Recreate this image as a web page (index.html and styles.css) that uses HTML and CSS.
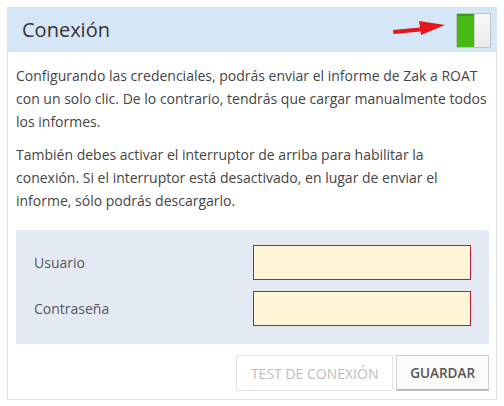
FILE: index.html
```html
<!DOCTYPE html>
<html lang="es">
<head>
<meta charset="utf-8">
<link rel="stylesheet" href="styles.css">
</head>
<body>
<div class="panel">
  <div class="panel-header">
    <h2 class="title">Conexión</h2>
    <div class="header-right">
      <svg class="arrow" width="56" height="22" viewBox="0 0 56 22">
        <polygon points="1,14 28,11.5 27,5 53,9 29,19 28.5,15.5 1.5,18" fill="#e5151b"/>
      </svg>
      <div class="toggle"><span class="toggle-on"></span><span class="toggle-knob"></span></div>
    </div>
  </div>
  <div class="panel-body">
    <p class="text">Configurando las credenciales, podrás enviar el informe de Zak a ROAT con un solo clic. De lo contrario, tendrás que cargar manualmente todos los informes.</p>
    <p class="text">También debes activar el interruptor de arriba para habilitar la conexión. Si el interruptor está desactivado, en lugar de enviar el informe, sólo podrás descargarlo.</p>
    <div class="form-box">
      <div class="form-row">
        <label class="label">Usuario</label>
        <input class="input" type="text">
      </div>
      <div class="form-row">
        <label class="label">Contraseña</label>
        <input class="input" type="password">
      </div>
    </div>
    <div class="actions">
      <button class="btn btn-disabled">TEST DE CONEXIÓN</button>
      <button class="btn">GUARDAR</button>
    </div>
  </div>
</div>
</body>
</html>
```
FILE: styles.css
```css
* { box-sizing: border-box; }
html, body { margin: 0; padding: 0; background: #fff; }
body {
  font-family: "Open Sans", "Liberation Sans", sans-serif;
  color: #444;
  padding: 7px;
}
.panel {
  width: 490px;
  height: 393px;
  border: 1px solid #e2e2e2;
  border-top: none;
  display: flex;
  flex-direction: column;
}
.panel-header {
  height: 46px;
  background: #d5e7f6;
  display: flex;
  align-items: center;
  justify-content: space-between;
  padding: 0 6px 0 15px;
  margin: 0 -1px;
}
.title {
  margin: 0;
  font-size: 20px;
  font-weight: 400;
  color: #333;
}
.header-right {
  display: flex;
  align-items: center;
  gap: 8px;
}
.arrow { display: block; margin-top: -6px; }
.toggle {
  width: 35px;
  height: 35px;
  display: flex;
  border: 1px solid #b9c3cc;
  border-radius: 1px;
  margin-top: 1px;
}
.toggle-on {
  width: 17px;
  background: #46b914;
  border-top: 2px solid #3a9a10;
}
.toggle-knob {
  flex: 1;
  background: linear-gradient(#fafafa, #e9e9e9);
  border-left: 1px solid #ccc;
}
.panel-body {
  flex: 1;
  padding: 0 7px 8px 8px;
  display: flex;
  flex-direction: column;
}
.text {
  margin: 12px 0 0;
  font-size: 14px;
  line-height: 23px;
  color: #444;
}
.text + .text { margin-top: 10px; }
.form-box {
  margin-top: 18px;
  background: #e4eaf4;
  padding: 15px 18px 18px 18px;
  display: flex;
  flex-direction: column;
  gap: 11px;
}
.form-row {
  display: flex;
  align-items: center;
  justify-content: space-between;
}
.label {
  font-size: 14px;
  color: #555;
}
.input {
  width: 218px;
  height: 35px;
  background: #fdf5d6;
  border: 1px solid #b4203c;
  margin: 0;
  padding: 0 6px;
  outline: none;
}
.actions {
  margin-top: 11px;
  display: flex;
  justify-content: flex-end;
  gap: 3px;
}
.btn {
  height: 36px;
  padding: 0 13px;
  font-family: "Open Sans", "Liberation Sans", sans-serif;
  font-size: 13.5px;
  font-weight: 600;
  color: #555;
  background: #fafafa;
  border: 1px solid #cfcfcf;
  border-bottom: 2px solid #bbb;
  border-radius: 1px;
}
.btn-disabled {
  color: #bdbdbd;
  background: #fff;
  border: 1px solid #e3e3e3;
  font-size: 14px;
  font-weight: 400;
  width: 157px;
}
```
